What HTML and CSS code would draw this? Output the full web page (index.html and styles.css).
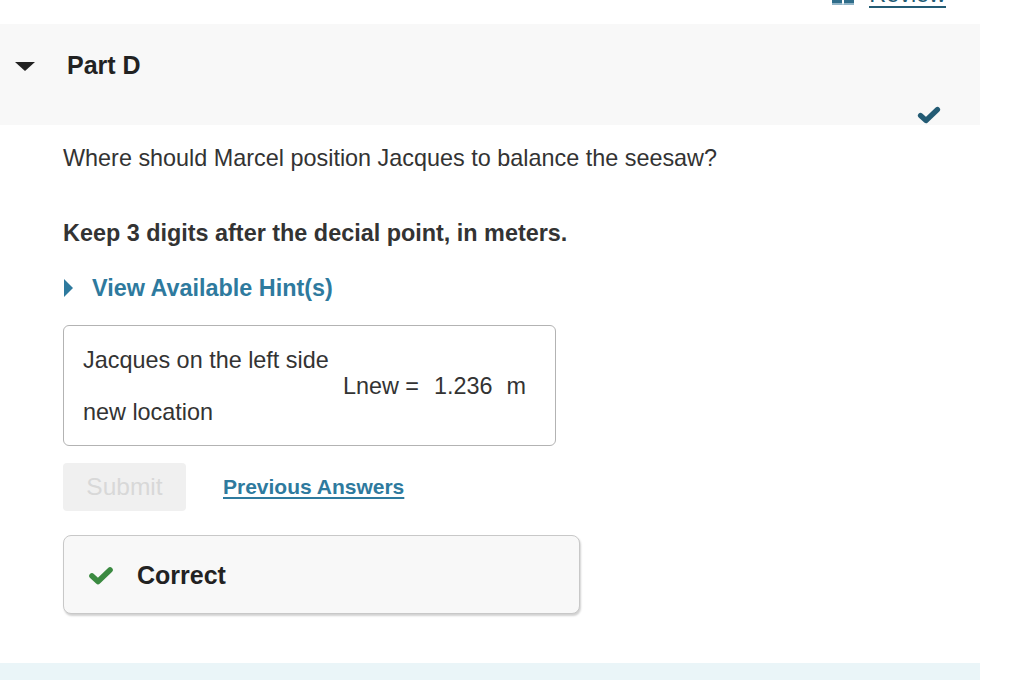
FILE: index.html
```html
<!DOCTYPE html>
<html lang="en">
<head>
<meta charset="utf-8">
<title>Part D</title>
<link rel="stylesheet" href="styles.css">
</head>
<body>
<div class="page">
  <div class="topbar">
    <a class="review" href="#">
      <svg class="book" width="22" height="10" viewBox="0 0 22 10"><path d="M0 0h10v6H0z M12 0h10v6H12z" fill="#2f6d8a"/><path d="M0 6h10l1 2 1-2h10v2H0z" fill="#8fb3c6"/></svg>
      <span class="review-text">Review</span>
    </a>
  </div>
  <div class="part-header">
    <div class="part-title">
      <svg class="caret-down" width="20" height="9" viewBox="0 0 20 9"><path d="M0 0h20L10 9z" fill="#222"/></svg>
      <span class="part-name">Part D</span>
    </div>
    <svg class="done-check" width="24" height="18" viewBox="0 0 24 18"><path d="M3.5 9.5l5.5 5L20.5 3.5" fill="none" stroke="#235b74" stroke-width="5.2" stroke-linecap="round" stroke-linejoin="round"/></svg>
  </div>
  <div class="content">
    <p class="question">Where should Marcel position Jacques to balance the seesaw?</p>
    <p class="instruction">Keep 3 digits after the decial point, in meters.</p>
    <div class="hint">
      <svg class="caret-right" width="9" height="18" viewBox="0 0 9 18"><path d="M0 0l9 9-9 9z" fill="#2e7a9e"/></svg>
      <span class="hint-text">View Available Hint(s)</span>
    </div>
    <div class="answer-box">
      <div class="answer-label">Jacques on the left side</div>
      <div class="answer-value"><span>Lnew =</span><span>1.236</span><span>m</span></div>
      <div class="answer-label">new location</div>
    </div>
    <div class="actions">
      <button class="submit" disabled>Submit</button>
      <a class="prev" href="#">Previous Answers</a>
    </div>
    <div class="feedback">
      <svg class="ok-check" width="26" height="19" viewBox="0 0 26 19"><path d="M4 10l6 5.5L22 4" fill="none" stroke="#3b8a41" stroke-width="5.6" stroke-linecap="round" stroke-linejoin="round"/></svg>
      <span class="feedback-text">Correct</span>
    </div>
  </div>
  <div class="next-band"></div>
</div>
</body>
</html>
```
FILE: styles.css
```css
* { box-sizing: border-box; }
html, body { margin: 0; padding: 0; background: #fff; }
body {
  font-family: "Liberation Sans", Arial, Helvetica, sans-serif;
  color: #333;
  overflow: hidden;
}
.page { width: 980px; }
.topbar {
  height: 24px;
  display: flex;
  justify-content: flex-end;
  padding-right: 34px;
  overflow: hidden;
}
.review {
  display: flex;
  align-items: flex-start;
  gap: 15px;
  margin-top: -18px;
  text-decoration: none;
}
.book { margin-top: 15px; }
.review-text {
  font-size: 23.4px;
  line-height: 24px;
  color: #235b74;
  border-bottom: 2px solid #235b74;
}
.part-header {
  background: #f8f8f8;
  height: 101px;
  display: flex;
  flex-direction: column;
  justify-content: space-between;
  padding: 27px 39px 1px 15px;
}
.part-title {
  display: flex;
  align-items: center;
  gap: 32px;
}
.part-name {
  font-size: 25px;
  font-weight: bold;
  color: #222;
  line-height: 28px;
}
.caret-down { margin-top: 2px; }
.done-check { align-self: flex-end; }
.content { padding-left: 63px; }
.question {
  margin: 0;
  padding-top: 21px;
  font-size: 23.4px;
  line-height: 24px;
}
.instruction {
  margin: 0;
  padding-top: 51px;
  font-size: 23.4px;
  line-height: 24px;
  font-weight: bold;
}
.hint {
  display: flex;
  align-items: center;
  gap: 19px;
  margin-top: 31px;
  height: 24px;
}
.caret-right { margin-left: 1px; }
.hint-text {
  font-size: 23.4px;
  font-weight: bold;
  color: #2e7a9e;
}
.answer-box {
  margin-top: 25px;
  width: 493px;
  height: 121px;
  border: 1px solid #b3b3b3;
  border-radius: 6px;
  padding: 21px 19px 0 19px;
  font-size: 23.4px;
  line-height: 26px;
}
.answer-value {
  display: flex;
  justify-content: flex-end;
  gap: 14px;
  padding-right: 10px;
}
.answer-value span:first-child { margin-right: 1px; }
.actions {
  display: flex;
  align-items: center;
  gap: 37px;
  margin-top: 17px;
}
.submit {
  width: 123px;
  height: 48px;
  border: none;
  border-radius: 4px;
  background: #f0f0f0;
  color: #d8d8d8;
  font-family: inherit;
  font-size: 24.5px;
  padding: 0;
}
.prev {
  font-size: 21px;
  font-weight: bold;
  color: #2e7a9e;
  text-decoration: underline;
  text-underline-offset: 3px;
  text-decoration-thickness: 2px;
}
.feedback {
  margin-top: 24px;
  width: 517px;
  height: 79px;
  background: #f8f8f8;
  border: 1px solid #c8c8c8;
  border-radius: 8px;
  box-shadow: 1px 2px 2px rgba(0,0,0,0.18);
  display: flex;
  align-items: center;
  gap: 23px;
  padding-left: 24px;
  padding-top: 2px;
}
.feedback-text {
  font-size: 25px;
  font-weight: bold;
  color: #222;
}
.next-band {
  margin-top: 49px;
  height: 20px;
  background: #eaf5f8;
}
```
